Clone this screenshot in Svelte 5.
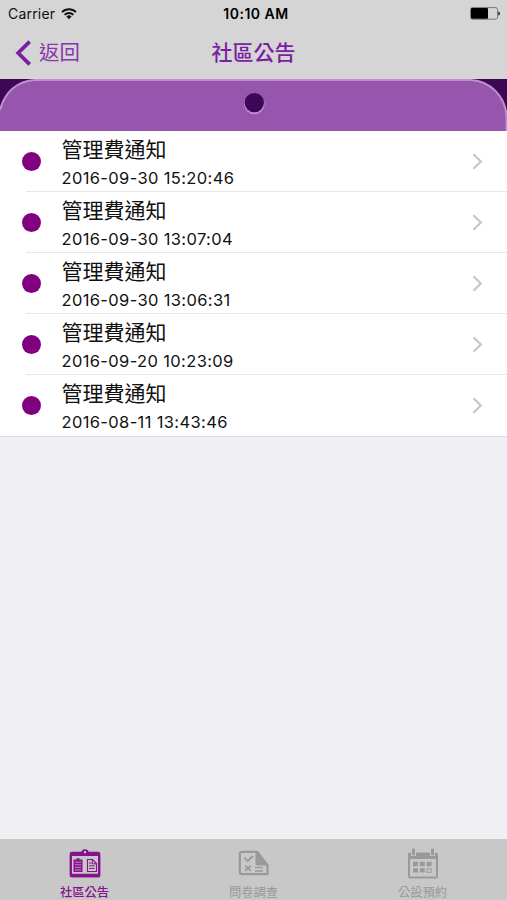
<script lang="ts">
  type Notice = { title: string; time: string }

  const notices: Notice[] = [
    { title: "管理費通知", time: "2016-09-30 15:20:46" },
    { title: "管理費通知", time: "2016-09-30 13:07:04" },
    { title: "管理費通知", time: "2016-09-30 13:06:31" },
    { title: "管理費通知", time: "2016-09-20 10:23:09" },
    { title: "管理費通知", time: "2016-08-11 13:43:46" },
  ]

  const tabs = [
    { id: "board", label: "社區公告" },
    { id: "survey", label: "問卷調查" },
    { id: "booking", label: "公設預約" },
  ]

  let activeTab = $state("board")
</script>

<div class="screen">
  <header>
    <div class="status-bar">
      <div class="carrier">
        <span>Carrier</span>
        <svg width="16" height="12" viewBox="0 0 16 12" fill="none" stroke="#111" stroke-width="2">
          <path d="M1 4.1a10 10 0 0 1 14 0" />
          <path d="M3.6 6.9a6.2 6.2 0 0 1 8.8 0" />
          <path d="M8 11.2L5.4 8.6a3.7 3.7 0 0 1 5.2 0z" fill="#111" stroke="none" />
        </svg>
      </div>
      <span class="clock">10:10 AM</span>
      <svg class="battery" width="30" height="13" viewBox="0 0 30 13">
        <rect x="0.6" y="0.6" width="27" height="11.6" rx="2" fill="none" stroke="#777" />
        <rect x="1" y="1" width="17" height="10.8" rx="1" fill="#000" />
        <path d="M28.3 4.4q1.6 .5 1.6 2t-1.6 2z" fill="#111" />
      </svg>
    </div>
    <div class="nav-bar">
      <button class="back">
        <svg width="17" height="26" viewBox="0 0 17 26" fill="none" stroke="#7a1fa2" stroke-width="3.8">
          <path d="M14.7 1.7L3.2 13l11.5 11.3" />
        </svg>
        <span>返回</span>
      </button>
      <h1>社區公告</h1>
    </div>
  </header>

  <!-- folder tab with a punched hole -->
  <div class="banner">
    <svg width="507" height="52" viewBox="0 0 507 52">
      <path d="M0 52V31C5 13 17 2 35 1H471C491 2 505 18 506.5 36V52z" fill="#9855ae" />
      <path d="M0 31C5 13 17 2 35 1H471C491 2 505 18 506.5 36V52" fill="none" stroke="#bd91cb" stroke-width="2" />
      <circle cx="254.3" cy="25" r="10.3" fill="#bd8dcd" />
      <circle cx="254.3" cy="23.6" r="9.7" fill="#3d0758" />
    </svg>
  </div>

  <ul class="notices">
    {#each notices as notice}
      <li>
        <span class="dot"></span>
        <div class="text">
          <div class="title">{notice.title}</div>
          <div class="time">{notice.time}</div>
        </div>
        <svg class="chevron" width="11" height="17" viewBox="0 0 11 17" fill="none" stroke="#c7c7cc" stroke-width="2.3">
          <path d="M1.5 1.3l7.3 7.2-7.3 7.2" />
        </svg>
      </li>
    {/each}
  </ul>

  <nav class="tab-bar">
    {#each tabs as tab}
      <button class:active={tab.id === activeTab} onclick={() => (activeTab = tab.id)}>
        <svg width="32" height="32" viewBox="0 0 32 32" fill="none" stroke="currentColor">
          {#if tab.id === "board"}
            <path d="M12.3 5a3.7 3.7 0 0 1 7.4 0z" fill="currentColor" stroke="none" />
            <rect x="1.8" y="5" width="28.4" height="23" rx="1.5" stroke-width="2.4" />
            <path d="M1 6.2h30M1 27.5h30" stroke-width="3.4" />
            <circle cx="16" cy="4.2" r="1.1" fill="#ddd" stroke="none" />
            <path d="M4.5 11.5h3v-1.2h3v1.2h3V24h-9z" fill="currentColor" stroke="none" />
            <path d="M6 14.2h6M6 16.8h6M6 19.4h6M6 22h6" stroke="#c9aad0" stroke-width=".8" />
            <path d="M18.5 11.5h5l4 4V23.5h-9z" stroke-width="1.1" />
            <path d="M23.2 11.5v4.3h4.3M20 15h2.3M20 17.8h5.7M20 20.4h5.7" stroke-width="1" />
          {:else if tab.id === "survey"}
            <path d="M4 3.8h15l10.5 13.7v8.7H4A2.2 2.2 0 0 1 1.8 24V6A2.2 2.2 0 0 1 4 3.8z" stroke-width="2.2" stroke-linejoin="round" />
            <path d="M17.5 3h2.5L31 17.5H20a2.5 2.5 0 0 1-2.5-2.5z" fill="currentColor" stroke="none" />
            <path d="M6.5 9.6l3.2 3.4 5.2-5M7.2 17.6l5.6 5.2M12.8 17.6l-5.6 5.2" stroke-width="1.8" />
            <path d="M17 19.6h8M17 23h8" stroke-width="1.5" />
          {:else}
            <rect x="2" y="5.5" width="28" height="24" rx="1" stroke-width="2" />
            <path d="M2 5.5h28v5.5H2z" fill="currentColor" stroke="none" />
            <path d="M6.5 1v7M25.5 1v7" stroke="#c8c8c8" stroke-width="5" />
            <path d="M6.5 .8v6.5M25.5 .8v6.5" stroke-width="3" />
            <path d="M6 16h5M12.8 16h5M19.6 16h5M6 22.4h5M12.8 22.4h5" stroke-width="4.4" />
            <rect x="20.1" y="20.7" width="4" height="3.6" stroke-width="1" />
          {/if}
        </svg>
        <span>{tab.label}</span>
      </button>
    {/each}
  </nav>
</div>

<style>
  :global(body) {
    margin: 0;
  }

  .screen {
    display: flex;
    flex-direction: column;
    width: 507px;
    height: 900px;
    overflow: hidden;
    background: #efeff4;
    color: #111;
    font-family: Inter, "Noto Sans CJK TC", sans-serif;
  }

  button {
    border: none;
    padding: 0;
    background: none;
    font: inherit;
    cursor: pointer;
  }

  svg {
    display: block;
    flex: none;
  }

  header {
    height: 79px;
    background: #d5d5d5;
  }

  .status-bar {
    display: grid;
    grid-template-columns: 1fr auto 1fr;
    align-items: center;
    height: 27px;
    padding: 0 7px 0 8px;
    font-size: 14px;
  }

  .carrier {
    display: flex;
    align-items: center;
    gap: 6px;
    letter-spacing: 0.2px;
  }

  .clock {
    padding-left: 4px;
    font-weight: 600;
    letter-spacing: 0.5px;
    color: #000;
  }

  .battery {
    justify-self: end;
  }

  .nav-bar {
    display: grid;
    grid-template-columns: 1fr auto 1fr;
    align-items: center;
    height: 50px;
    padding: 1px 15px 0;
    color: #7a1fa2;
  }

  .back {
    display: flex;
    align-items: center;
    gap: 7px;
    color: #8a35ab;
    font-size: 20.4px;
    line-height: 26px;
  }

  h1 {
    margin: 0;
    font-size: 21px;
    font-weight: 500;
    line-height: 26px;
  }

  .banner {
    height: 52px;
    background: #3d0758;
  }

  .notices {
    margin: 0;
    padding: 0;
    list-style: none;
    background: #fff;
    border-bottom: 1px solid #dcdce0;
  }

  li {
    display: flex;
    align-items: center;
    box-sizing: border-box;
    height: 61px;
    padding: 0 24px 0 22px;
    /* separator starts inset from the left edge */
    background: linear-gradient(#e8e8ea, #e8e8ea) 26px 100% / 100% 1px no-repeat;
  }

  li:last-child {
    background: none;
  }

  .dot {
    width: 19px;
    height: 19px;
    border-radius: 50%;
    background: #800080;
  }

  .text {
    flex: 1;
    margin-left: 20.5px;
    padding-top: 2px;
    color: #111;
  }

  .title {
    font-size: 21px;
    line-height: 30px;
  }

  .time {
    font-size: 16.5px;
    line-height: 26px;
    letter-spacing: 0.36px;
  }

  .tab-bar {
    display: flex;
    height: 61px;
    margin-top: auto;
    background: #c8c8c8;
  }

  .tab-bar button {
    display: flex;
    flex: 1;
    flex-direction: column;
    align-items: center;
    justify-content: flex-start;
    padding-top: 9px;
    color: #999;
    font-size: 12.3px;
    line-height: 18px;
  }

  .tab-bar span {
    margin-top: 3.5px;
    white-space: nowrap;
  }

  .tab-bar .active {
    color: #88118e;
    font-weight: 500;
  }
</style>
